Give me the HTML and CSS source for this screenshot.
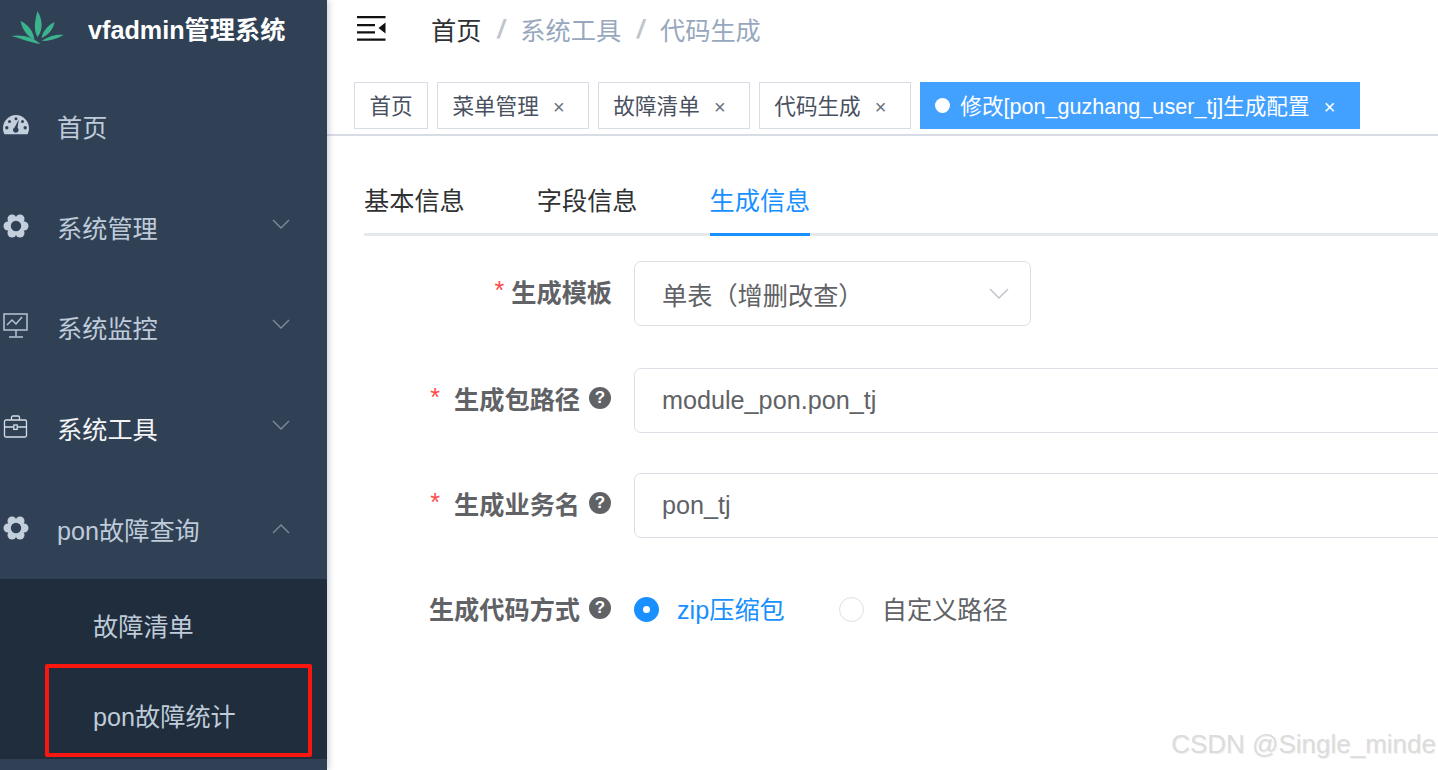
FILE: index.html
```html
<!DOCTYPE html>
<html lang="zh">
<head>
<meta charset="utf-8">
<title>vfadmin</title>
<link rel="stylesheet" href="styles.css">
</head>
<body>
<div class="app">
  <aside class="sidebar">
    <div class="logo">
      <svg class="logo-mark" viewBox="0 0 54 36" width="55" height="36">
        <g fill="#3bb38d">
          <path d="M27 27 C23 21 24 11 27 1 C32 9 33 20 27 27Z"/>
          <path d="M24 30 C18 27 12 21 10 11 C17 14 23 21 24 30Z"/>
          <path d="M31 28 C32 21 38 15 44 12 C43 19 38 25 31 28Z"/>
          <path d="M30 34 C20 33 10 28 1 26 C11 24 23 27 30 34Z"/>
          <path d="M31 31 C37 27 45 24 53 25 C46 29 39 31 31 31Z"/>
        </g>
      </svg>
      <span class="logo-title">vfadmin管理系统</span>
    </div>
    <nav class="menu">
      <div class="menu-item">
        <svg class="menu-icon" viewBox="0 0 26 20" width="26" height="20"><path fill="#c3cfdd" fill-rule="evenodd" d="M13 0C6 0 0 6 0 13c0 2.200.5 4.300 1.400 6.200h23.200C25.500 17.300 26 15.200 26 13 26 6 20 0 13 0ZM13 2.300a1.500 1.500 0 1 1 0 3 1.500 1.500 0 0 1 0-3ZM6.500 5a1.500 1.500 0 1 1 0 3 1.500 1.500 0 0 1 0-3ZM19.500 5a1.500 1.500 0 1 1 0 3 1.500 1.500 0 0 1 0-3ZM3.800 11a1.700 1.700 0 1 1 0 3.400 1.700 1.700 0 0 1 0-3.400ZM22.200 11a1.700 1.700 0 1 1 0 3.400 1.700 1.700 0 0 1 0-3.400ZM15.800 4.500 14.600 12.800a2.800 2.800 0 1 1-3-.4Z"/></svg>
        <span class="menu-label">首页</span>
      </div>
      <div class="menu-item">
        <svg class="menu-icon" viewBox="0 0 26 26" width="26" height="26"><g fill="#c3cfdd"><circle cx="13" cy="13" r="9"/><circle cx="21" cy="13" r="4.500"/><circle cx="17" cy="6" r="4.500"/><circle cx="9" cy="6" r="4.500"/><circle cx="5" cy="13" r="4.500"/><circle cx="9" cy="20" r="4.500"/><circle cx="17" cy="20" r="4.500"/></g><circle cx="13" cy="13" r="5.200" fill="#304156"/></svg>
        <span class="menu-label">系统管理</span>
        <svg class="chevron" viewBox="0 0 18 10" width="18" height="10"><path d="M1 1l8 8 8-8" fill="none" stroke="#7f8b9a" stroke-width="1.400"/></svg>
      </div>
      <div class="menu-item">
        <svg class="menu-icon" viewBox="0 0 26 26" width="26" height="26" fill="none" stroke="#b6c3d2" stroke-width="1.500"><rect x="1" y="1" width="23" height="16"/><path d="M4 12l5-5 4 4 6-7M13 17v6M6 24h14"/></svg>
        <span class="menu-label">系统监控</span>
        <svg class="chevron" viewBox="0 0 18 10" width="18" height="10"><path d="M1 1l8 8 8-8" fill="none" stroke="#7f8b9a" stroke-width="1.400"/></svg>
      </div>
      <div class="menu-item is-open-parent">
        <svg class="menu-icon" viewBox="0 0 26 24" width="26" height="24" fill="none" stroke="#d6dde6" stroke-width="1.300"><rect x="1.500" y="5" width="22" height="17" rx="1.500"/><path d="M8.500 5V2.500c0-1 .6-1.500 1.500-1.500h5c.9 0 1.500.5 1.500 1.500V5M1.500 12h9M15 12h8.500"/><rect x="10.800" y="10" width="3.400" height="4.400"/></svg>
        <span class="menu-label">系统工具</span>
        <svg class="chevron" viewBox="0 0 18 10" width="18" height="10"><path d="M1 1l8 8 8-8" fill="none" stroke="#7f8b9a" stroke-width="1.400"/></svg>
      </div>
      <div class="menu-item">
        <svg class="menu-icon" viewBox="0 0 26 26" width="26" height="26"><g fill="#c3cfdd"><circle cx="13" cy="13" r="9"/><circle cx="21" cy="13" r="4.500"/><circle cx="17" cy="6" r="4.500"/><circle cx="9" cy="6" r="4.500"/><circle cx="5" cy="13" r="4.500"/><circle cx="9" cy="20" r="4.500"/><circle cx="17" cy="20" r="4.500"/></g><circle cx="13" cy="13" r="5.200" fill="#304156"/></svg>
        <span class="menu-label">pon故障查询</span>
        <svg class="chevron chevron-up" viewBox="0 0 18 10" width="18" height="10"><path d="M1 9l8-8 8 8" fill="none" stroke="#7f8b9a" stroke-width="1.400"/></svg>
      </div>
      <div class="submenu">
        <div class="submenu-item">故障清单</div>
        <div class="submenu-item">pon故障统计</div>
      </div>
    </nav>
    <div class="highlight-box"></div>
  </aside>
  <main class="main">
    <header class="navbar">
      <svg class="hamburger" viewBox="0 0 30 26" width="30" height="26"><path d="M0 1h28.500v2.200H0ZM0 9h18v2.200H0ZM0 16.300h18v2.200H0ZM0 23.500h28.500v2.200H0ZM28.500 7.500v11L21.500 13Z" fill="#111"/></svg>
      <div class="breadcrumb">
        <span class="crumb-home">首页</span><span class="crumb-sep">/</span><span class="crumb">系统工具</span><span class="crumb-sep">/</span><span class="crumb">代码生成</span>
      </div>
    </header>
    <div class="tags">
      <div class="tag tag-plain">首页</div>
      <div class="tag">菜单管理<span class="tag-close">×</span></div>
      <div class="tag">故障清单<span class="tag-close">×</span></div>
      <div class="tag">代码生成<span class="tag-close">×</span></div>
      <div class="tag tag-active"><span class="tag-dot"></span>修改[pon_guzhang_user_tj]生成配置<span class="tag-close">×</span></div>
    </div>
    <section class="content">
      <div class="tabs">
        <div class="tab">基本信息</div>
        <div class="tab">字段信息</div>
        <div class="tab tab-active">生成信息</div>
      </div>
      <form class="form">
        <div class="row row-select">
          <div class="label"><span class="req req-tight">*</span>生成模板</div>
          <div class="select"><span>单表（增删改查）</span><svg viewBox="0 0 20 11" width="20" height="11"><path d="M1 1l9 9 9-9" fill="none" stroke="#c0c4cc" stroke-width="1.500"/></svg></div>
        </div>
        <div class="row">
          <div class="label"><span class="req">*</span>生成包路径<span class="help">?</span></div>
          <div class="input">module_pon.pon_tj</div>
        </div>
        <div class="row">
          <div class="label"><span class="req">*</span>生成业务名<span class="help">?</span></div>
          <div class="input">pon_tj</div>
        </div>
        <div class="row row-radio">
          <div class="label">生成代码方式<span class="help">?</span></div>
          <div class="radios">
            <div class="radio radio-on"><span class="radio-dot"></span>zip压缩包</div>
            <div class="radio"><span class="radio-dot"></span>自定义路径</div>
          </div>
        </div>
      </form>
    </section>
    <div class="watermark">CSDN @Single_minde</div>
  </main>
</div>
</body>
</html>
```

FILE: styles.css
```css
* { box-sizing: border-box; }
html, body { margin: 0; height: 100%; overflow: hidden; }
body {
  font-family: "Liberation Sans", "Noto Sans CJK SC", sans-serif;
  background: #fff;
}
.app { display: flex; width: 1438px; height: 770px; overflow: hidden; }

.sidebar {
  position: relative;
  flex: 0 0 327px;
  background: #304156;
  box-shadow: 2px 0 6px rgba(0, 21, 41, .2);
  z-index: 2;
}
.logo {
  display: flex;
  align-items: center;
  height: 75.500px;
  padding: 0 0 19px 10px;
}
.logo-mark { flex: none; }
.logo-title {
  margin-left: 23px;
  font-size: 25.200px;
  font-weight: 700;
  color: #fff;
}
.menu-item {
  display: flex;
  align-items: center;
  height: 100.700px;
  padding: 0 37px 0 3px;
  color: #bfcbd9;
  font-size: 25.200px;
}
.menu-icon { flex: 0 0 26px; margin: 0 28px 2px 0; }
.menu-label { flex: 1; }
.is-open-parent .menu-label { color: #f4f4f5; }
.chevron { flex: none; margin-top: -6px; }
.chevron-up { margin-top: 0; }
.submenu { background: #1f2d3d; height: 180px; }
.submenu-item {
  display: flex;
  align-items: center;
  height: 90px;
  padding: 2px 0 0 93px;
  color: #bfcbd9;
  font-size: 25.200px;
}
.highlight-box {
  position: absolute;
  left: 45px;
  top: 664px;
  width: 267px;
  height: 93px;
  border: 4px solid #f9170f;
  border-radius: 2px;
}

.main { position: relative; flex: 1; min-width: 0; }
.navbar {
  display: flex;
  align-items: center;
  height: 76px;
  padding: 0 0 18px 30px;
  box-shadow: 0 1px 4px rgba(0, 21, 41, .08);
}
.hamburger { flex: none; margin-bottom: 2px; }
.breadcrumb {
  display: flex;
  align-items: center;
  margin-left: 44px;
  font-size: 25.200px;
  color: #97a8be;
}
.crumb-home { color: #303133; }
.crumb-sep { margin: 0 16px; font-weight: 700; color: #c0c4cc; font-size: 25px; font-style: italic; }

.tags {
  display: flex;
  gap: 9px;
  height: 60px;
  padding: 6px 0 0 27px;
  border-bottom: 2px solid #d8dce5;
  background: #fff;
}
.tag {
  display: flex;
  align-items: center;
  height: 47px;
  padding: 0 14.400px 3px;
  border: 1px solid #d8dce5;
  color: #495060;
  font-size: 21.600px;
  white-space: nowrap;
}
.tag:not(.tag-plain) { padding-right: 23.200px; }
.tag-close {
  width: 12px;
  margin: 5px 0 0 14px;
  font-size: 20px;
  font-weight: 300;
  line-height: 1;
  color: #68707d;
  text-align: center;
}
.tag-active {
  border-color: #42a0ff;
  background: #42a0ff;
  color: #fff;
}
.tag-active .tag-close { color: #fff; }
.tag-dot {
  flex: none;
  width: 15px;
  height: 15px;
  margin: 3px 10px 0 0;
  border-radius: 50%;
  background: #fff;
}

.content { padding: 31px 0 0 37px; }
.tabs {
  display: flex;
  gap: 72px;
  height: 69px;
  border-bottom: 3.600px solid #e4e7ed;
  font-size: 25.200px;
  color: #303133;
}
.tab { height: 69px; line-height: 68px; }
.tab-active {
  color: #1890ff;
  border-bottom: 3.600px solid #1890ff;
}
.form { padding-top: 25px; width: 1300px; }
.row {
  display: flex;
  align-items: center;
  height: 65px;
  margin-bottom: 40px;
}
.row-select { margin-bottom: 42px; }
.row-radio { height: 30px; margin-top: 56px; margin-bottom: 0; }
.label {
  display: flex;
  align-items: center;
  justify-content: flex-end;
  flex: 0 0 270px;
  padding: 0 23px 6px 0;
  font-size: 25.200px;
  font-weight: 700;
  color: #606266;
  white-space: nowrap;
}
.row-select .label { padding-right: 22px; }
.row-radio .label { padding-bottom: 2px; }
.req { margin-right: 14px; color: #ff4949; font-weight: 400; font-size: 25px; }
.req-tight { margin-right: 7px; }
.help {
  display: inline-flex;
  align-items: center;
  justify-content: center;
  width: 22px;
  height: 22px;
  margin-left: 9px;
  border-radius: 50%;
  background: #606266;
  color: #fff;
  font-size: 17px;
  font-weight: 700;
}
.select {
  display: flex;
  align-items: center;
  justify-content: space-between;
  width: 397px;
  height: 65px;
  padding: 0 21px 0 27px;
  border: 1px solid #dcdfe6;
  border-radius: 7px;
  font-size: 25.200px;
  color: #606266;
}
.input {
  display: flex;
  align-items: center;
  width: 1000px;
  height: 65px;
  padding-left: 27px;
  border: 1px solid #dcdfe6;
  border-radius: 7px;
  font-size: 25.200px;
  color: #606266;
}
.radios { display: flex; gap: 54px; }
.radio {
  display: flex;
  align-items: center;
  padding-bottom: 2px;
  font-size: 25.200px;
  color: #606266;
}
.radio-dot {
  width: 25px;
  height: 25px;
  margin: 2px 18px 0 0;
  border: 1px solid #dcdfe6;
  border-radius: 50%;
  background: #fff;
}
.radio-on { color: #1890ff; }
.radio-on .radio-dot { border: 9px solid #1890ff; }

.watermark {
  position: absolute;
  right: 2px;
  bottom: 10px;
  font-family: "Liberation Sans", sans-serif;
  font-size: 26px;
  color: #dcdcdc;
  text-shadow: 1px 1px 1px #eee;
  white-space: nowrap;
}
```
